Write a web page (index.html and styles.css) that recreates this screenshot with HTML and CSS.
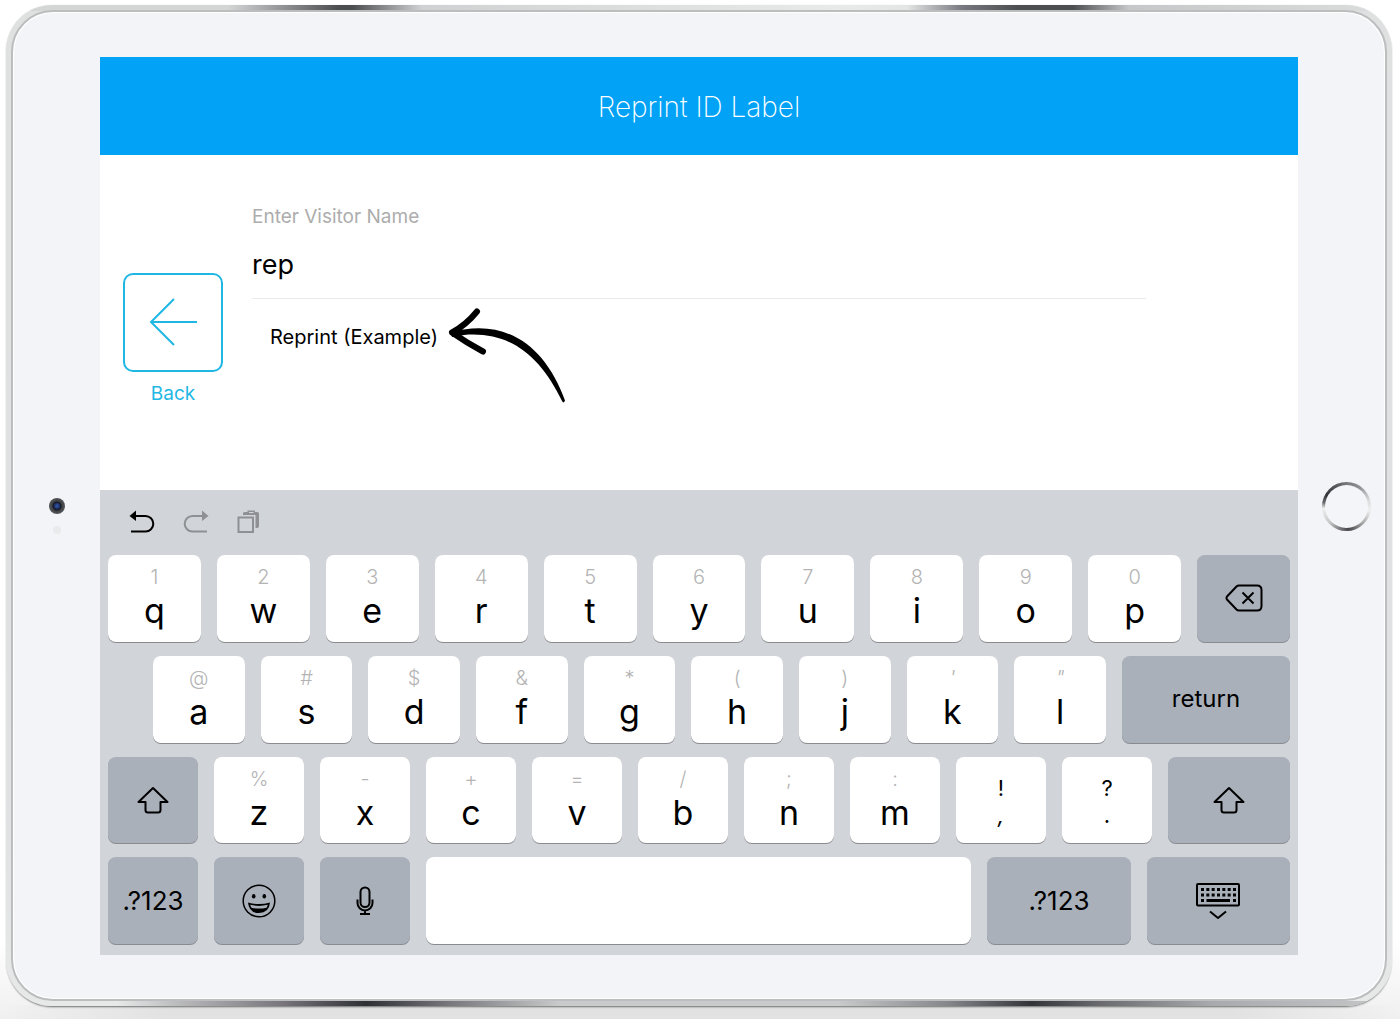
FILE: index.html
```html
<!DOCTYPE html>
<html lang="en">
<head>
<meta charset="utf-8">
<meta name="viewport" content="width=device-width, initial-scale=1">
<title>Reprint ID Label</title>
<link rel="stylesheet" href="styles.css">
</head>
<body>
<svg class="sprite" aria-hidden="true">
  <symbol id="shift" viewBox="0 0 32 28"><path d="M16 2 L30.500 16 H23.500 V24 Q23.500 26.500 21 26.500 H11 Q8.500 26.500 8.500 24 V16 H1.500 Z"/></symbol>
</svg>
<div class="device">
  <div class="glass">
    <div class="bezel bezel-left"><span class="camera"></span><span class="sensor"></span></div>
    <div class="screen">
      <header class="titlebar"><h1>Reprint ID Label</h1></header>
      <main class="lookup">
        <button class="back" type="button">
          <span class="back-tile"><svg width="50" height="50" viewBox="0 0 50 50"><path d="M26 1 L3 24 L26 47 M3 24 H49"/></svg></span>
          Back
        </button>
        <form class="search">
          <label for="visitor">Enter Visitor Name</label>
          <input id="visitor" type="text" value="rep" autocomplete="off">
          <ul class="results">
            <li><a href="#visitor">Reprint (Example)</a>
              <svg class="pointer" width="120" height="98" viewBox="446 307 120 98" aria-hidden="true"><path class="head" d="M477 311.500 Q466 325 452 332.500 Q467 343 483 351.500"/><path d="M450 330 L464 329.500 C513 322 547 351 565 400.500 Q563.500 404 562 401 C541 358 512 331 464 335 L452 337 Z"/></svg>
            </li>
          </ul>
        </form>
      </main>
      <section class="keyboard" aria-label="Keyboard">
        <div class="tools">
          <button type="button" aria-label="Undo"><svg width="26" height="24" viewBox="0 0 26 24"><path class="line" d="M4 6 H16.500 A7.800 7.800 0 0 1 16.500 21.600 H2"/><path class="fill" d="M0.500 6 L7 0.500 V11 Z"/></svg></button>
          <button type="button" aria-label="Redo" class="dim"><svg width="26" height="24" viewBox="0 0 26 24"><path class="line" d="M20 6 H9.500 A7.800 7.800 0 0 0 9.500 21.600 H24"/><path class="fill" d="M25.500 6 L19 0.500 V11 Z"/></svg></button>
          <button type="button" aria-label="Paste" class="dim"><svg width="24" height="24" viewBox="0 0 24 24"><path class="fill" d="M6 5 V3.500 Q6 2 7.500 2 H10.500 V0.500 H18 V2 H20.500 Q22 2 22 3.500 V16 Q22 18 20 18 H18.500 V5 Z"/><path class="shine" d="M12 2.500 H16.500"/><path class="box" d="M1.500 7.500 H16 V22 H1.500 Z"/></svg></button>
        </div>
        <div class="keys">
          <div class="row row-1">
            <button class="key"><small>1</small>q</button>
            <button class="key"><small>2</small>w</button>
            <button class="key"><small>3</small>e</button>
            <button class="key"><small>4</small>r</button>
            <button class="key"><small>5</small>t</button>
            <button class="key"><small>6</small>y</button>
            <button class="key"><small>7</small>u</button>
            <button class="key"><small>8</small>i</button>
            <button class="key"><small>9</small>o</button>
            <button class="key"><small>0</small>p</button>
            <button class="key control icon" aria-label="Delete"><svg width="38" height="28" viewBox="0 0 38 28"><path d="M14 1.500 H32 Q36.500 1.500 36.500 6 V22 Q36.500 26.500 32 26.500 H14 Q12.500 26.500 11.500 25.500 L2 15.500 Q1 14 2 12.500 L11.500 2.500 Q12.500 1.500 14 1.500 Z M17.500 8.500 L28.500 19.500 M28.500 8.500 L17.500 19.500"/></svg></button>
          </div>
          <div class="row row-2">
            <button class="key"><small>@</small>a</button>
            <button class="key"><small>#</small>s</button>
            <button class="key"><small>$</small>d</button>
            <button class="key"><small>&amp;</small>f</button>
            <button class="key"><small>*</small>g</button>
            <button class="key"><small>(</small>h</button>
            <button class="key"><small>)</small>j</button>
            <button class="key"><small class="slant">'</small>k</button>
            <button class="key"><small class="slant">"</small>l</button>
            <button class="key control return">return</button>
          </div>
          <div class="row row-3">
            <button class="key control icon" aria-label="Shift"><svg width="32" height="28"><use href="#shift"/></svg></button>
            <button class="key"><small>%</small>z</button>
            <button class="key"><small>-</small>x</button>
            <button class="key"><small>+</small>c</button>
            <button class="key"><small>=</small>v</button>
            <button class="key"><small>/</small>b</button>
            <button class="key"><small>;</small>n</button>
            <button class="key"><small>:</small>m</button>
            <button class="key pair"><span>!</span><span class="slant">,</span></button>
            <button class="key pair"><span>?</span><span>.</span></button>
            <button class="key control icon shift-right" aria-label="Shift"><svg width="32" height="28"><use href="#shift"/></svg></button>
          </div>
          <div class="row row-4">
            <button class="key control">.?123</button>
            <button class="key control icon" aria-label="Emoji"><svg width="34" height="34" viewBox="0 0 34 34"><circle class="thin" cx="17" cy="17" r="15.800"/><g class="fill"><ellipse cx="11.700" cy="12.300" rx="1.800" ry="2.200"/><ellipse cx="22.300" cy="12.300" rx="1.800" ry="2.200"/><path d="M6 18.500 Q17 21.500 28 18.500 Q27 29 17 29 Q7 29 6 18.500 Z"/></g><path class="teeth" d="M8.200 20.800 Q17 23 25.800 20.800 Q25.500 22.500 24.500 23.700 Q17 25.500 9.500 23.700 Q8.500 22.500 8.200 20.800 Z"/></svg></button>
            <button class="key control icon" aria-label="Dictate"><svg width="18" height="30" viewBox="0 0 18 30"><rect x="4.500" y="1.500" width="9" height="19.500" rx="4.500"/><path d="M1.500 13.500 V17 A7.500 7.500 0 0 0 16.500 17 V13.500 M9 24.500 V28 M4 28 H14"/></svg></button>
            <button class="key space" aria-label="Space"></button>
            <button class="key control wide">.?123</button>
            <button class="key control icon wide" aria-label="Hide keyboard"><svg width="44" height="38" viewBox="0 0 44 38"><rect x="1" y="2" width="42" height="21.500" rx="1"/><path class="dots" d="M5 7.500 H40 M5 13 H40"/><path class="dash" d="M5 18.500 H8 M10.500 18.500 H34 M37 18.500 H40"/><path d="M14 29.500 L22 36 L30 29.500"/></svg></button>
          </div>
        </div>
      </section>
    </div>
    <div class="bezel bezel-right"><button class="home" type="button" aria-label="Home"></button></div>
  </div>
</div>
</body>
</html>
```
FILE: styles.css
```css
* { box-sizing: border-box; }

body {
  margin: 0;
  min-height: 100vh;
  padding: 5px 8px 13px 6px;
  display: flex;
  font-family: Inter, "Liberation Sans", sans-serif;
  color: #000;
  background:
    linear-gradient(90deg, #fff0, #e2e2e2 12%, #e2e2e2 88%, #fff0) bottom / 100% 14px no-repeat,
    linear-gradient(#fff0, #f0f0f0) bottom / 100% 80px no-repeat,
    #fff;
}

button, input {
  font: inherit;
  color: inherit;
  border: 0;
  padding: 0;
  background: none;
}

.sprite { position: absolute; width: 0; height: 0; }

/* Tablet body */
.device {
  flex: 1;
  display: flex;
  padding: 5px;
  border-radius: 46px;
  background:
    linear-gradient(90deg, #d4d6d6 0 16%, #c4c5c6 17%, #4b4e4f 24%, #4b4e4f 25%, #d0d1d2 30%, #e8eae9 60%, #e4e6e5 65%, #777980 69%, #4c4f50 73%, #4c4f50 77%, #c6c7c8 81%, #dcdddd) top / 100% 6px no-repeat,
    linear-gradient(90deg, #e6e9e8 0 8%, #b5b5b8 13%, #77757b 20%, #2f2f36 26%, #77777c 32%, #c9cacb 40%, #c9cacb 60%, #85868a 68%, #33343a 74%, #6a6a6f 79%, #a9aaad 87%, #c5c7c9) bottom / 100% 5px no-repeat,
    linear-gradient(#dfe1e1, #dfe1e2 80%, #e6e9e8);
  box-shadow: 0 0 1px #c3c5c6, 0 2px 2px -1px #666;
}

.glass {
  flex: 1;
  display: grid;
  grid-template-columns: 87px 1fr 87px;
  padding: 45px 0 44px;
  border: 2px solid #bcbdbf;
  border-radius: 42px;
  background: #f3f4f7;
  box-shadow: inset 0 0 0 1px #fff, inset 0 0 1px 1px #fff;
}

.bezel { display: flex; flex-direction: column; align-items: center; justify-content: center; }
.bezel-left { gap: 12px; padding-top: 20px; }
.bezel-right { padding-left: 9px; }

.camera {
  width: 16px;
  height: 16px;
  border-radius: 50%;
  background: radial-gradient(circle, #2e4f9c 0 1px, #1b2a55 3px, #16181f 4px, #3f4144 5px, #55585a 8px);
}
.sensor { width: 8px; height: 8px; border-radius: 50%; background: #e9eaec; }

.home {
  width: 49px;
  height: 49px;
  border: 3px solid transparent;
  border-radius: 50%;
  background:
    linear-gradient(#f4f5f8, #f4f5f8) padding-box,
    conic-gradient(#77787c, #8f9093 35deg, #dcdddd 75deg, #efefef 100deg, #aaa 135deg, #46464b 175deg, #6a6a6e 190deg, #c4c4c4 225deg, #f0f0f0 265deg, #6a6a6e 280deg, #323238 300deg, #77787c 360deg) border-box;
}

/* Application */
.screen { display: flex; flex-direction: column; background: #fff; }

.titlebar {
  height: 98px;
  display: grid;
  place-items: center;
  padding-top: 2px;
  background: #02a3f6;
  color: #fff;
}
.titlebar h1 { margin: 0; font-size: 28px; font-weight: 250; line-height: 36px; }

.lookup {
  flex: 1;
  min-height: 335px;
  display: grid;
  grid-template-columns: 100px 1fr;
  column-gap: 29px;
  align-items: start;
  padding: 0 152px 0 23px;
}

.back {
  display: flex;
  flex-direction: column;
  align-items: center;
  gap: 8px;
  margin-top: 118px;
  font-size: 19px;
  line-height: 28px;
  color: #1fb7e4;
}
.back-tile {
  width: 100px;
  height: 99px;
  display: grid;
  place-items: center;
  border: 2px solid #1fb7e4;
  border-radius: 10px;
}
.back svg { fill: none; stroke: #1fb7e4; stroke-width: 2; }

.search { display: flex; flex-direction: column; padding-top: 48px; }
.search label { font-size: 19px; line-height: 28px; color: #adadad; }
.search input {
  height: 68px;
  border-bottom: 1px solid #e9ebef;
  border-radius: 0;
  outline: 0;
  font-size: 27px;
}
.results { margin: 0; padding: 24px 18px; list-style: none; }
.results li { position: relative; width: max-content; font-size: 20px; line-height: 28px; }
.results a { color: inherit; text-decoration: none; }
.pointer { position: absolute; left: 176px; top: -16px; }
.pointer .head { fill: none; stroke: #000; stroke-width: 6; stroke-linecap: round; stroke-linejoin: round; }

/* Keyboard */
.keyboard { padding: 0 8px 11px; background: #d1d4d9; }

.tools { height: 65px; display: flex; align-items: center; gap: 28px; padding: 0 0 2px 21px; }
.tools button { display: flex; }
.tools .line { fill: none; stroke: currentColor; stroke-width: 2; }
.tools .fill { fill: currentColor; }
.tools .box { fill: #d1d4d9; stroke: currentColor; stroke-width: 2; }
.tools .shine { stroke: #d1d4d9; }
.dim { color: #8e9093; }

.keys { height: 389px; display: grid; grid-template-rows: repeat(4, 1fr); gap: 14px; }
.row { display: flex; gap: 16px; }
.row-2 { padding-left: 45px; }

.key {
  flex: 90 1 0;
  min-width: 0;
  display: flex;
  flex-direction: column;
  align-items: center;
  padding-top: 10px;
  border-radius: 8px;
  background: #fff;
  box-shadow: 0 1px 0 #898b8f;
  font-size: 34px;
  font-weight: 370;
  line-height: 44px;
}
.key small { font-size: 20px; font-weight: 300; line-height: 24px; color: #b4b4b4; }
.slant { font-style: italic; }

.pair { padding-top: 18px; font-size: 22px; line-height: 27px; }

.control {
  justify-content: center;
  padding: 0;
  background: #a9b0ba;
  font-size: 26px;
  font-weight: 400;
  line-height: 32px;
}
.return { flex-grow: 165; font-size: 24px; }
.shift-right { flex-grow: 122; }
.space { flex-grow: 544; }
.wide { flex-grow: 143; }

.control svg { fill: none; stroke: #000; stroke-width: 2; stroke-linejoin: round; }
.control .thin { stroke-width: 1.5; }
.control .fill { fill: #000; stroke: none; }
.control .teeth { fill: #a9b0ba; stroke: none; }
.control .dots { stroke-width: 3; stroke-dasharray: 3 2.333; }
.control .dash { stroke-width: 3; }
```
